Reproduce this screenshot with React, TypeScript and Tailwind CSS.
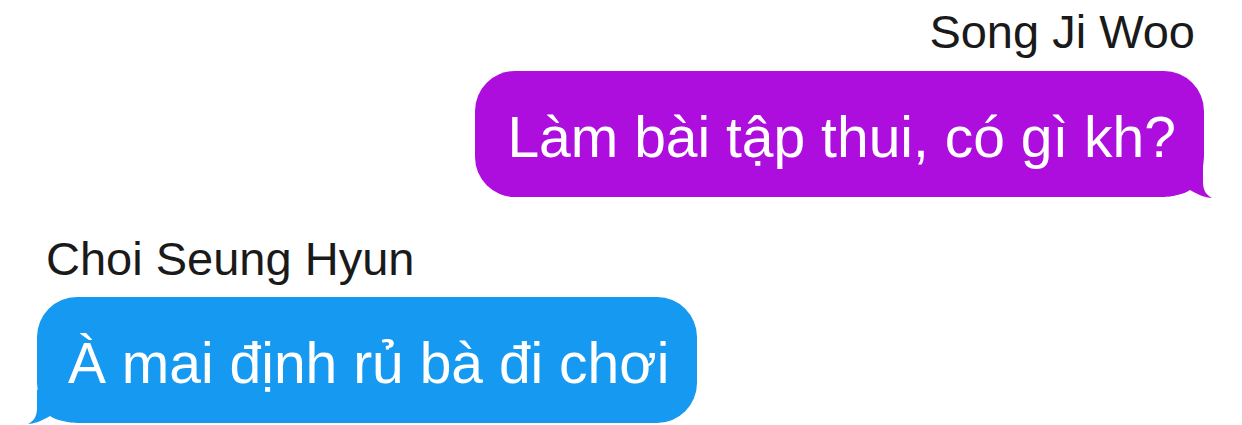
import React from "react";

function TailRight({ color }: { color: string }) {
  return (
    <svg
      className="absolute right-[-8px] bottom-[-1px]"
      width="44"
      height="34"
      viewBox="0 0 44 34"
    >
      <path
        d="M35 0 L35 18 C35 26 38 31 44 34 C39 34 30 31 22 26 C18 29 12 31 0 32.5 L0 0 Z"
        fill={color}
      />
    </svg>
  );
}

function TailLeft({ color }: { color: string }) {
  return (
    <svg
      className="absolute left-[-9px] bottom-[-1px]"
      width="44"
      height="34"
      viewBox="0 0 44 34"
    >
      <path
        d="M9 0 L9 18 C9 26 6 31 0 34 C5 34 14 31 22 26 C26 29 32 31 44 32.5 L44 0 Z"
        fill={color}
      />
    </svg>
  );
}

export default function App() {
  return (
    <div
      className="w-[1242px] h-[425px] overflow-hidden bg-white flex flex-col"
      style={{ fontFamily: '"Liberation Sans", Arial, sans-serif' }}
    >
      <div className="flex flex-col items-end pt-[5px]">
        <div className="pr-[47px] text-[47px] leading-[54px] text-[#1a1a1a]">
          Song Ji Woo
        </div>
        <div className="relative mt-[12px] mr-[38px] rounded-[40px] bg-[#ad0ddd] pl-[32px] pr-[28px] pt-[33px] pb-[27px]">
          <span className="relative z-10 block text-[57px] leading-[66px] text-white whitespace-nowrap">
            Làm bài tập thui, có gì kh?
          </span>
          <TailRight color="#ad0ddd" />
        </div>
      </div>
      <div className="flex flex-col items-start mt-[35px]">
        <div className="pl-[46px] text-[47px] leading-[54px] text-[#1a1a1a]">
          Choi Seung Hyun
        </div>
        <div className="relative mt-[11px] ml-[37px] rounded-[40px] bg-[#1699f1] pl-[31px] pr-[28px] pt-[33px] pb-[27px]">
          <span className="relative z-10 block text-[57px] leading-[66px] text-white whitespace-nowrap">
            À mai định rủ bà đi chơi
          </span>
          <TailLeft color="#1699f1" />
        </div>
      </div>
    </div>
  );
}
